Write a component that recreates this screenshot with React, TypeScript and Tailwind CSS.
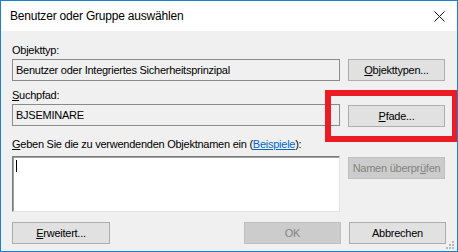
import React from "react";

const Btn = ({ children, disabled, className = "" }: { children: React.ReactNode; disabled?: boolean; className?: string }) => (
  <div
    className={
      "h-[22px] flex items-center justify-center border leading-none whitespace-nowrap " +
      (disabled ? "bg-[#cccccc] border-[#bfbfbf] text-[#838383] " : "bg-[#e1e1e1] border-[#adadad] text-black ") +
      className
    }
  >
    {children}
  </div>
);

const Field = ({ children }: { children?: React.ReactNode }) => (
  <div className="w-[328px] h-[22px] border border-[#8a8a8a] bg-[#f0f0f0] flex items-center pl-[3px] text-black whitespace-nowrap">
    {children}
  </div>
);

export default function App() {
  return (
    <div className="relative w-[458px] h-[252px] border border-[#1b7fd4] bg-[#f0f0f0] flex flex-col font-['Liberation_Sans',sans-serif] text-[11px] tracking-[-0.25px] text-black overflow-hidden">
      {/* title bar */}
      <div className="h-[30px] bg-white flex items-center justify-between pl-[9px] pr-[10px]">
        <span className="text-[12px] tracking-[-0.2px] text-[#000]">Benutzer oder Gruppe auswählen</span>
        <svg width="11" height="11" viewBox="0 0 11 11" className="mr-[2px]">
          <path d="M0.5 0.5 L10.5 10.5 M10.5 0.5 L0.5 10.5" stroke="#111" strokeWidth="1" fill="none" />
        </svg>
      </div>

      <div className="flex flex-col px-[11px]">
        <div className="mt-[12px] h-[15px] leading-[15px]">Objekttyp:</div>
        <div className="mt-[1px] flex gap-[8px]">
          <Field>Benutzer oder Integriertes Sicherheitsprinzipal</Field>
          <Btn className="w-[97px]">
            <span><span className="underline">O</span>bjekttypen...</span>
          </Btn>
        </div>

        <div className="mt-[7px] h-[15px] leading-[15px]">
          <span className="underline">S</span>uchpfad:
        </div>
        <div className="mt-[1px] flex gap-[8px]">
          <Field>BJSEMINARE</Field>
          <Btn className="w-[97px] mt-[1px] h-[21px]">
            <span><span className="underline">P</span>fade...</span>
          </Btn>
        </div>

        <div className="mt-[10px] h-[15px] leading-[15px] whitespace-nowrap">
          <span className="underline">G</span>eben Sie die zu verwendenden Objektnamen ein (
          <span className="text-[#0066cc] underline">Beispiele</span>):
        </div>
        <div className="mt-[4px] flex gap-[8px] items-start">
          <div className="w-[328px] h-[56px] bg-white border border-t-[#7a7a7a] border-l-[#7a7a7a] border-r-[#e3e3e3] border-b-[#e3e3e3] shadow-[inset_1px_1px_0_#a0a0a0] pl-[3px] pt-[3px]">
            <div className="w-[1px] h-[12px] bg-black"></div>
          </div>
          <Btn disabled className="w-[97px] mt-[1px] h-[21px]">
            <span>Namen überpr<span className="underline">ü</span>fen</span>
          </Btn>
        </div>

        <div className="mt-[10px] flex items-center">
          <Btn className="w-[98px]">
            <span><span className="underline">E</span>rweitert...</span>
          </Btn>
          <div className="flex-1"></div>
          <Btn disabled className="w-[97px]">OK</Btn>
          <Btn className="w-[97px] ml-[8px]">Abbrechen</Btn>
        </div>
      </div>

      {/* size grip */}
      <svg width="10" height="10" viewBox="0 0 10 10" className="absolute right-[2px] bottom-[1px]">
        <rect x="7" y="1" width="2" height="2" fill="#b8b8b8" />
        <rect x="4" y="4" width="2" height="2" fill="#b8b8b8" />
        <rect x="7" y="4" width="2" height="2" fill="#b8b8b8" />
        <rect x="1" y="7" width="2" height="2" fill="#b8b8b8" />
        <rect x="4" y="7" width="2" height="2" fill="#b8b8b8" />
        <rect x="7" y="7" width="2" height="2" fill="#b8b8b8" />
      </svg>

      {/* red highlight overlay */}
      <div className="absolute left-[324px] top-[89px] w-[133px] h-[52px] border-[6px] border-[#ed1c24] pointer-events-none"></div>
    </div>
  );
}
